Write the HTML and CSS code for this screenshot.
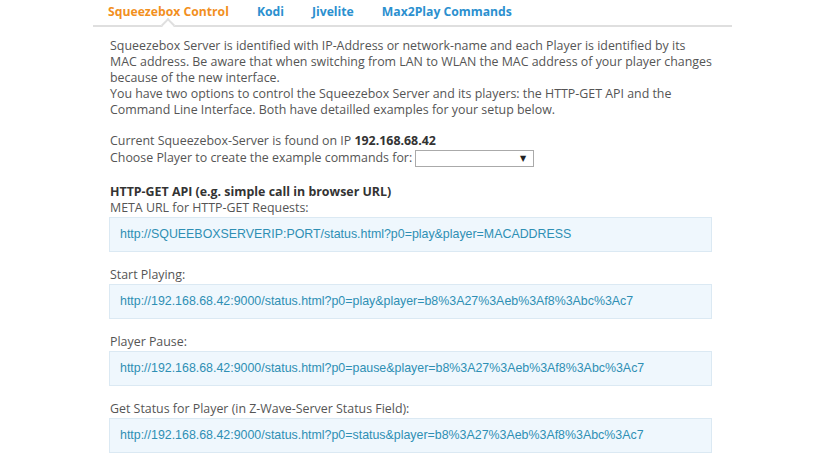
FILE: index.html
```html
<!DOCTYPE html>
<html>

<head>
  <link rel="stylesheet" href="styles.css">
</head>

<body>
  <div class="page">
    <ul class="tabs">
      <li class="tab active"><a href="#">Squeezebox Control</a></li>
      <li class="tab"><a href="#">Kodi</a></li>
      <li class="tab"><a href="#">Jivelite</a></li>
      <li class="tab"><a href="#">Max2Play Commands</a></li>
    </ul>

    <div class="content">
      <p class="intro">
        Squeezebox Server is identified with IP-Address or network-name and each Player is identified by its MAC address. Be aware that when switching from LAN to WLAN the MAC address of your player changes because of the new interface.<br>
        You have two options to control the Squeezebox Server and its players: the HTTP-GET API and the Command Line Interface. Both have detailled examples for your setup below.
      </p>

      <div class="server-info">
        <div>Current Squeezebox-Server is found on IP <b>192.168.68.42</b></div>
        <div class="player-row">
          <label for="player">Choose Player to create the example commands for:</label>
          <span class="select-wrap">
            <select id="player">
              <option value=""></option>
            </select>
          </span>
        </div>
      </div>

      <h4 class="section-title">HTTP-GET API (e.g. simple call in browser URL)</h4>

      <div class="command">
        <div class="command-label">META URL for HTTP-GET Requests:</div>
        <div class="command-url">http://SQUEEBOXSERVERIP:PORT/status.html?p0=play&amp;player=MACADDRESS</div>
      </div>

      <div class="command">
        <div class="command-label">Start Playing:</div>
        <div class="command-url">http://192.168.68.42:9000/status.html?p0=play&amp;player=b8%3A27%3Aeb%3Af8%3Abc%3Ac7</div>
      </div>

      <div class="command">
        <div class="command-label">Player Pause:</div>
        <div class="command-url">http://192.168.68.42:9000/status.html?p0=pause&amp;player=b8%3A27%3Aeb%3Af8%3Abc%3Ac7</div>
      </div>

      <div class="command">
        <div class="command-label">Get Status for Player (in Z-Wave-Server Status Field):</div>
        <div class="command-url">http://192.168.68.42:9000/status.html?p0=status&amp;player=b8%3A27%3Aeb%3Af8%3Abc%3Ac7</div>
      </div>
    </div>
  </div>
</body>

</html>
```

FILE: styles.css
```css
body {
  margin: 0;
  background-color: #ffffff;
  font-family: "Open Sans", "DejaVu Sans", sans-serif;
  font-size: 12.4px;
  color: #555555;
}

.page {
  width: 639px;
  margin-left: 93px;
}

.tabs {
  display: flex;
  flex-direction: row;
  margin: 0;
  padding: 0 0 0 1px;
  list-style: none;
  border-bottom: 2px solid #dfdfdf;
}

.tab {
  position: relative;
  padding: 4px 14px 5px 14px;
  line-height: 16px;
}

.tab a {
  font-size: 12.2px;
  font-weight: 700;
  color: #2b90cf;
  text-decoration: none;
}

.tab.active a {
  color: #f2901e;
}

.tab.active::after {
  content: "";
  position: absolute;
  left: 50%;
  bottom: -5px;
  width: 8px;
  height: 8px;
  margin-left: -5px;
  background-color: #ffffff;
  border-top: 2px solid #dfdfdf;
  border-left: 2px solid #dfdfdf;
  transform: rotate(45deg);
}

.content {
  padding: 11px 19px 0 17px;
  line-height: 16px;
}

.intro {
  margin: 0 0 15px 0;
}

.server-info {
  margin-bottom: 17px;
}

.player-row {
  display: flex;
  flex-direction: row;
  align-items: center;
  gap: 3px;
}

.select-wrap {
  position: relative;
  display: inline-block;
}

.select-wrap select {
  display: block;
  width: 119px;
  height: 17px;
  margin: 1px 0 0 0;
  padding: 0;
  border: 1px solid #aaaaaa;
  background-color: #ffffff;
  appearance: none;
  -webkit-appearance: none;
}

.select-wrap::after {
  content: "\25BC";
  position: absolute;
  right: 8px;
  top: 4px;
  font-size: 8px;
  line-height: 10px;
  color: #222222;
  pointer-events: none;
}

b {
  color: #333333;
  font-weight: 700;
}

.section-title {
  margin: 0;
  font-size: 12.4px;
  font-weight: 700;
  color: #333333;
}

.command {
  margin-bottom: 15px;
}

.command-label {
  margin-bottom: 1px;
}

.command-url {
  margin-left: -1px;
  width: 581px;
  padding: 8px 10px 9px 10px;
  background-color: #eff7fd;
  border: 1px solid #dbe9f3;
  font-family: "Liberation Sans", Arial, sans-serif;
  font-size: 12.4px;
  color: #2e8fb4;
}
```
